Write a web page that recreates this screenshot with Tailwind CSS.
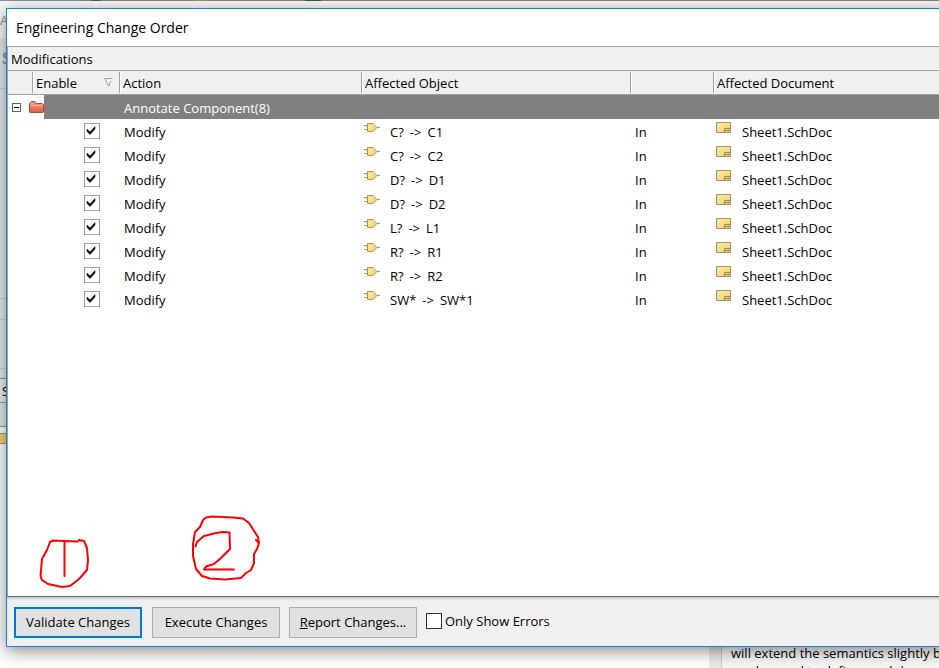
<!DOCTYPE html>
<html lang="en">
<head>
<meta charset="utf-8">
<title>Engineering Change Order</title>
<script src="https://cdn.jsdelivr.net/npm/@tailwindcss/browser@4"></script>
</head>
<body class="bg-white font-['Open_Sans','Noto_Sans',sans-serif] text-[13px] leading-5 text-black">
<svg class="absolute size-0" aria-hidden="true">
  <defs>
    <linearGradient id="gold" x1="0" y1="0" x2="1" y2="1"><stop offset="0" stop-color="#fbeeb0"/><stop offset="1" stop-color="#efcf6c"/></linearGradient>
    <linearGradient id="red" x1="0" y1="0" x2="0" y2="1"><stop offset="0" stop-color="#f5a184"/><stop offset="1" stop-color="#de5c3e"/></linearGradient>
    <symbol id="part" viewBox="0 0 16 10">
      <path d="M0 2.5h3M0 6.5h3M13 4.5h3" stroke="#a8946a" fill="none"/>
      <path d="M3.5.5h5.5l4 4-4 4H3.500z" fill="url(#gold)" stroke="#b39440"/>
    </symbol>
    <symbol id="sheet" viewBox="0 0 15 11">
      <path d="M.5.500h14v10H.5z" fill="url(#gold)" stroke="#a8965c"/>
      <path d="M8.500 10V6.500H14M9 8.500h5" fill="none" stroke="#9d8748"/>
    </symbol>
  </defs>
</svg>
<main class="relative h-screen overflow-hidden pt-2 pl-[6px]">
  <div class="absolute inset-0 flex flex-col" aria-hidden="true">
    <div class="flex h-px shrink-0 bg-[#85807f]">
      <span class="w-20 bg-[#8691a0]"></span><span class="ml-[11px] w-[10px] bg-[#45693b]"></span><span class="ml-[94px] w-[14px] bg-[#a8915c]"></span><span class="ml-24 w-4 bg-[#2f5c45]"></span>
    </div>
    <div class="flex h-[37px] shrink-0 items-center bg-[#f8f8f9]"><span class="text-[#929292]">A</span></div>
    <div class="flex h-[341px] w-2 shrink-0 flex-col border-b border-[#999] bg-[#e8e8e8]">
      <span class="pt-2 pl-[2px] text-base font-bold text-[#7f9fc1]">S</span>
      <span class="mt-[18px] h-px bg-[#ccc]"></span><span class="mt-[209px] h-px bg-[#ccc]"></span><span class="mt-5 h-px bg-[#ccc]"></span><span class="mt-12 h-px bg-[#ccc]"></span>
    </div>
    <div class="h-6 w-2 shrink-0 border-b border-[#999] bg-[#eee] pt-[2px] pl-[2px]">S</div>
    <div class="h-6 w-2 shrink-0 border-b border-[#999] bg-[#e8e8e8]"></div>
    <div class="mt-[6px] h-[11px] w-2 shrink-0 border-y border-[#a8965c] bg-[#eed47e]"></div>
    <div class="flex flex-1 items-end">
      <div class="ml-[709px] flex h-[30px] flex-1 border-l-[12px] border-[#e9e9e9]">
        <p class="flex-1 overflow-hidden border-l border-[#ccc] bg-[#f7f7f7] pt-[6px] pl-[9px] leading-[18px] whitespace-nowrap">will extend the semantics slightly b<br>can be used to define modules</p>
      </div>
    </div>
  </div>

  <section class="relative -mr-2 flex h-[calc(100vh-29px)] flex-col border border-[#1883d7] bg-[#f0f0f0] shadow-[0_4px_16px_rgba(0,0,0,0.45)]">
    <h1 class="h-[37px] shrink-0 bg-white px-[9px] pt-2 text-sm leading-[21px]">Engineering Change Order</h1>
    <div class="relative flex-1 border-b border-l border-b-[#696969] border-l-[#a0a0a0] bg-white">
      <h2 class="h-[25px] border-y border-[#a0a0a0] bg-[#f0f0f0] pt-[2px] pl-[3px]">Modifications</h2>
      <table class="w-full table-fixed border-collapse text-left">
        <colgroup><col class="w-6"><col class="w-[87px]"><col class="w-[242px]"><col class="w-[269px]"><col class="w-[83px]"><col></colgroup>
        <thead>
          <tr class="h-6 bg-[#f0f0f0] shadow-[inset_0_-1px_0_#a0a0a0] *:p-0 *:font-normal">
            <th></th>
            <th><div class="mb-px flex h-[21px] items-center justify-between border-l border-[#a0a0a0] pr-[6px] pl-[3px] shadow-[inset_1px_0_0_#fff]">Enable
              <svg class="size-[9px]" viewBox="0 0 9 9" fill="none"><path d="M.5.500h8M1 1l3.500 7M5.500 8V5l2-2" stroke="#a0a0a0"/></svg></div></th>
            <th><div class="mb-px flex h-[21px] items-center border-l border-[#a0a0a0] pl-[3px] shadow-[inset_1px_0_0_#fff]">Action</div></th>
            <th><div class="mb-px flex h-[21px] items-center border-l border-[#a0a0a0] pl-[3px] shadow-[inset_1px_0_0_#fff]">Affected Object</div></th>
            <th><div class="mb-px h-[21px] border-l border-[#a0a0a0] shadow-[inset_1px_0_0_#fff]"></div></th>
            <th><div class="mb-px flex h-[21px] items-center border-l border-[#a0a0a0] pl-[3px] shadow-[inset_1px_0_0_#fff]">Affected Document</div></th>
          </tr>
        </thead>
        <tbody id="changes">
          <tr class="h-6 text-white">
            <td colspan="2" class="p-0"><div class="flex h-6 items-center">
              <button aria-label="Collapse group" class="ml-[4px] flex size-[9px] items-center justify-center border border-[#606060] bg-white"><span class="h-px w-[5px] bg-black"></span></button>
              <svg class="ml-[8px] h-3 w-[15px]" viewBox="0 0 15 12"><path d="M.5 11V2.500L1.500 1.500 2.500.500h3l1.500 2h6.500l1 1V11l-.5.500H1z" fill="url(#red)" stroke="#b8492f"/><path d="M1.500 4.500H13" stroke="#f9b79f"/></svg>
              <span class="h-6 flex-1 bg-[#808080]"></span>
            </div></td>
            <td colspan="4" class="bg-[#808080] p-0 pt-[2px] pl-[5px]">Annotate Component(8)</td>
          </tr>
        </tbody>
      </table>
      <svg class="pointer-events-none absolute bottom-0 left-0 h-[96px] w-[280px]" viewBox="8 500 280 96" fill="none" stroke="#f00" stroke-width="2" stroke-linecap="round" stroke-linejoin="round">
        <path d="M78 541.500L64 541 53 540.500 50 542 47 550 42 559 40.500 576 42 580 48 584 62 587 70 586 79 579 87 570 88 560 87 548 84 541 79 540M64.500 542V576"/>
        <path d="M259 543L258 537 249 523 243 518.500 233 517.500 212 516.500 206 517.500 203 520 200 527 195 532 193 544 193 556 196 569 202 576 210 578.500 225 579.500 241 578 246 573 251 570 254 563 254 554 257 549 259 543 256 540"/>
        <path d="M195.500 546.500L197 542 204 536 216 533 223 532 229.500 532.500 230 549 221 558 214 564 206 566.500 204 569.500H234"/>
      </svg>
    </div>
    <footer class="flex h-[49px] shrink-0 items-center gap-[9px] pl-[7px] pt-px shadow-[inset_0_2px_2px_#ccc]">
      <button class="mr-px h-[31px] w-32 border-2 border-[#0078d7] bg-[#e1e1e1]">Validate Changes</button>
      <button class="h-[31px] w-32 border border-[#adadad] bg-[#e1e1e1]">Execute Changes</button>
      <button class="h-[31px] w-32 border border-[#adadad] bg-[#e1e1e1]"><u>R</u>eport Changes...</button>
      <label class="flex items-center gap-[3px] pb-[2px]"><input type="checkbox" class="size-4 appearance-none border border-[#333] bg-white">Only Show Errors</label>
    </footer>
  </section>
</main>
<template id="row">
  <tr class="h-6">
    <td colspan="2" class="p-0"><label class="relative ml-[76px] block size-4"><input type="checkbox" checked aria-label="Enable change" class="peer block size-4 appearance-none border border-[#a0a0a0] bg-white"><svg class="pointer-events-none absolute inset-0 hidden size-4 peer-checked:block" viewBox="0 0 16 16"><path d="M3 6l3 3L11 3.500v2.500l-5 5.500-3-3z" fill="#000" stroke="#000" stroke-width=".5"/></svg></label></td>
    <td class="p-0 pt-[2px] pl-[5px]">Modify</td>
    <td class="p-0 pt-[2px] pl-[3px]"><div class="flex gap-[10px]"><svg class="mt-px h-[10px] w-4"><use href="#part"/></svg><div class="flex gap-[6px]"><span data-from></span> <span>-&gt;</span> <span data-to></span></div></div></td>
    <td class="p-0 pt-[2px] pl-[5px]">In</td>
    <td class="p-0 pt-[2px] pl-[3px]"><div class="flex gap-[11px]"><svg class="h-[11px] w-[15px]"><use href="#sheet"/></svg><span>Sheet1.SchDoc</span></div></td>
  </tr>
</template>
<script>
  const body = document.getElementById('changes'), tpl = document.getElementById('row');
  [['C?','C1'],['C?','C2'],['D?','D1'],['D?','D2'],['L?','L1'],['R?','R1'],['R?','R2'],['SW*','SW*1']].forEach(([from, to]) => {
    const row = tpl.content.cloneNode(true);
    row.querySelector('[data-from]').textContent = from;
    row.querySelector('[data-to]').textContent = to;
    body.append(row);
  });
</script>
</body>
</html>
